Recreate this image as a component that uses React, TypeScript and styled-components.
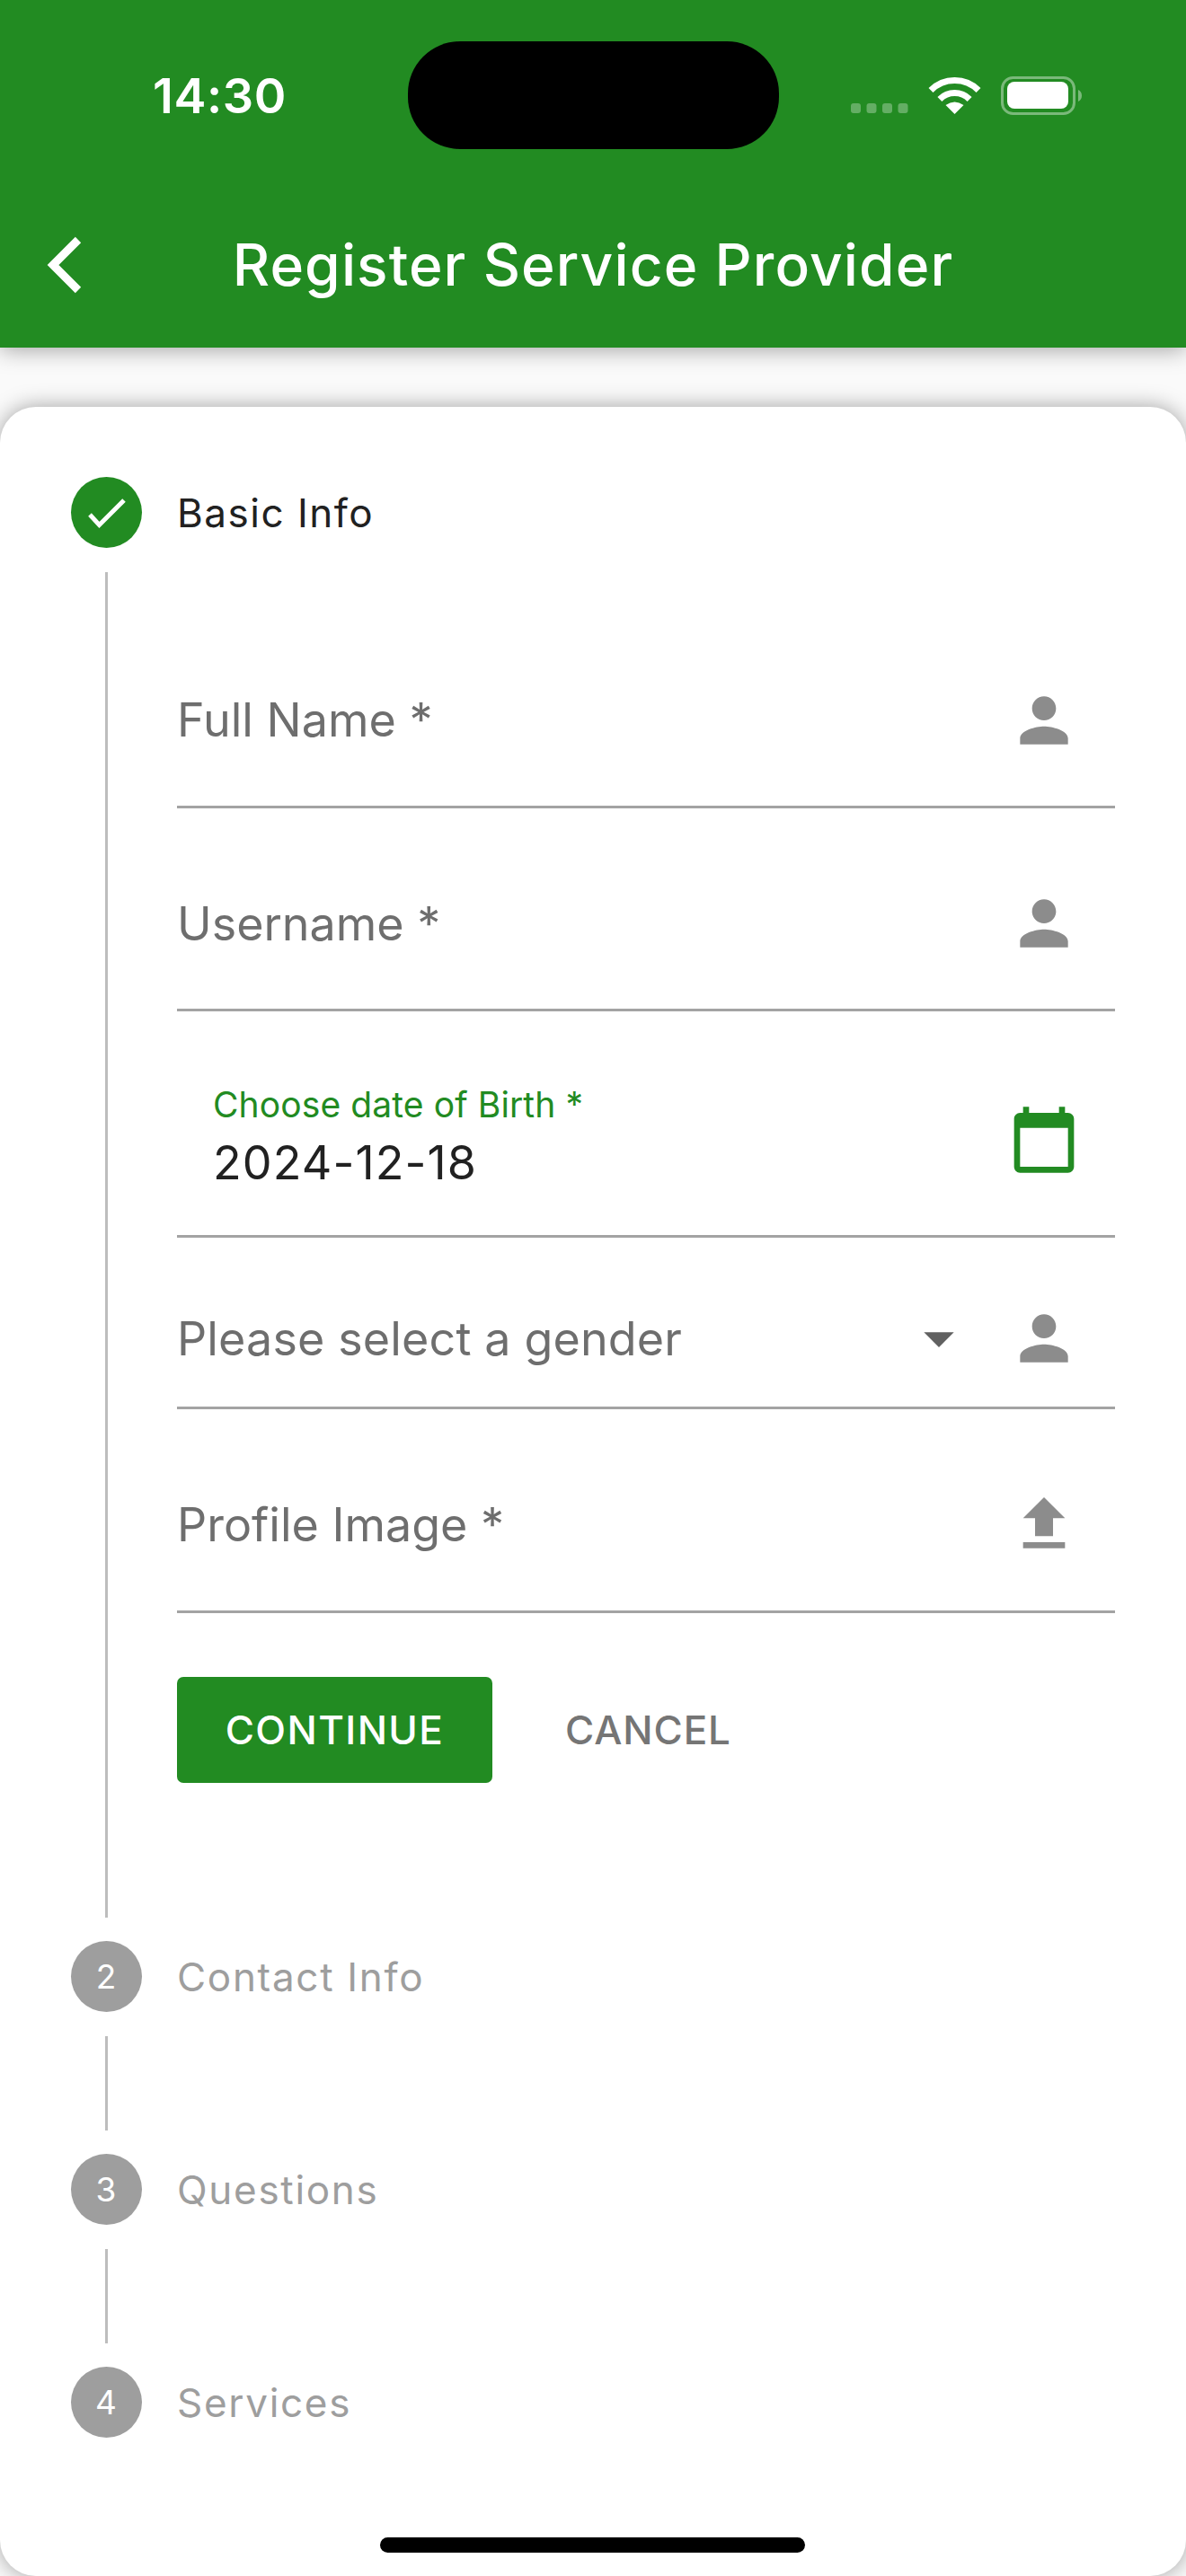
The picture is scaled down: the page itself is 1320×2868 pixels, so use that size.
import React from "react";
import styled, { createGlobalStyle } from "styled-components";

const GREEN = "#228B22";

const Global = createGlobalStyle`
  html, body { margin: 0; padding: 0; background: #fafafa; }
  * { box-sizing: border-box; }
`;

const Page = styled.div`
  width: 1320px;
  height: 2868px;
  display: flex;
  flex-direction: column;
  overflow: hidden;
  background: #fafafa;
  font-family: Inter, "Liberation Sans", sans-serif;
`;

const Header = styled.header`
  position: relative;
  height: 387px;
  flex-shrink: 0;
  padding-top: 46px;
  background: ${GREEN};
  box-shadow: 0 2px 24px rgba(0, 0, 0, 0.36);
  color: #fff;
`;

const StatusBar = styled.div`
  display: flex;
  align-items: center;
  height: 120px;
  padding-left: 170px;
`;

const Time = styled.div`
  width: 150px;
  margin-right: 134px;
  font-size: 54px;
  font-weight: 600;
  letter-spacing: 0.6px;
  white-space: nowrap;
`;

const Island = styled.div`
  width: 413px;
  height: 120px;
  margin-right: 80px;
  border-radius: 58px;
  background: #000;
`;

const NavBar = styled.div`
  display: grid;
  grid-template-columns: 1fr auto 1fr;
  align-items: center;
  height: 184px;
  margin-top: 37px;
`;

const BackButton = styled.div`
  display: flex;
  padding-left: 52px;
`;

const Title = styled.h1`
  margin: 0;
  font-size: 64px;
  font-weight: 500;
  line-height: 1;
  letter-spacing: 1.1px;
  white-space: nowrap;
`;

const Card = styled.main`
  position: relative;
  flex: 1;
  margin-top: 66px;
  padding: 78px 79px 0;
  border-radius: 40px;
  background: #fff;
  box-shadow: 0 0 24px rgba(0, 0, 0, 0.36);
`;

const StepHead = styled.div`
  display: flex;
  align-items: center;
  gap: 40px;
  height: 79px;
`;

const StepCircle = styled.div<{ $active?: boolean }>`
  display: flex;
  align-items: center;
  justify-content: center;
  width: 79px;
  height: 79px;
  padding-right: 1px;
  border-radius: 50%;
  background: ${(p) => (p.$active ? GREEN : "#9e9e9e")};
  color: #fff;
  font-size: 37px;
`;

const StepTitle = styled.div<{ $active?: boolean }>`
  margin-left: -1px;
  font-size: 44px;
  letter-spacing: ${(p) => (p.$active ? 1.5 : 1.7)}px;
  color: ${(p) => (p.$active ? "#212121" : "#9e9e9e")};
`;

const StepBody = styled.div<{ $height: number }>`
  display: flex;
  height: ${(p) => p.$height}px;
  margin: 27px 0 26px 38px;
`;

const Connector = styled.div`
  width: 3px;
  flex-shrink: 0;
  background: #bdbdbd;
`;

const StepContent = styled.div`
  width: 1044px;
  margin-left: 77px;
  padding-top: 37px;
`;

const Field = styled.div<{ $height: number; $top: number }>`
  display: flex;
  align-items: center;
  height: ${(p) => p.$height}px;
  padding-top: ${(p) => p.$top}px;
  padding-right: 39px;
  border-bottom: 3px solid #a3a3a3;
`;

const Placeholder = styled.div<{ $wide?: boolean }>`
  flex: 1;
  font-size: 52px;
  letter-spacing: ${(p) => (p.$wide ? 0.15 : 0)}px;
  color: #6e6e6e;
  white-space: nowrap;
`;

const DateBlock = styled.div`
  flex: 1;
  display: flex;
  flex-direction: column;
  padding-left: 40px;
  margin-top: -6px;
`;

const FloatingLabel = styled.div`
  font-size: 39px;
  line-height: 47px;
  letter-spacing: 0.1px;
  color: ${GREEN};
`;

const DateValue = styled.div`
  margin-top: 11px;
  font-size: 52px;
  line-height: 62px;
  letter-spacing: 1.1px;
  color: #212121;
`;

const DropArrow = styled.div`
  display: flex;
  margin-right: 37px;
`;

const ButtonRow = styled.div`
  display: flex;
  align-items: center;
  margin-top: 71px;
`;

const ContinueButton = styled.button`
  width: 351px;
  height: 118px;
  padding: 0;
  border: 0;
  border-radius: 7px;
  background: ${GREEN};
  color: #fff;
  font: 500 44px Inter, "Liberation Sans", sans-serif;
  letter-spacing: 1.4px;
`;

const CancelButton = styled.button`
  margin-left: 81px;
  padding: 0;
  border: 0;
  background: none;
  color: #757575;
  font: 500 44px Inter, "Liberation Sans", sans-serif;
  letter-spacing: 0.9px;
`;

const HomeIndicator = styled.div`
  position: absolute;
  left: 423px;
  bottom: 26px;
  width: 473px;
  height: 17px;
  border-radius: 9px;
  background: #000;
`;

const person =
  "M12 12c2.21 0 4-1.79 4-4s-1.79-4-4-4-4 1.79-4 4 1.79 4 4 4zm0 2c-2.67 0-8 1.34-8 4v2h16v-2c0-2.66-5.33-4-8-4z";
const calendar =
  "M20 3h-1V1h-2v2H7V1H5v2H4c-1.1 0-2 .9-2 2v16c0 1.1.9 2 2 2h16c1.1 0 2-.9 2-2V5c0-1.1-.9-2-2-2zm0 18H4V8h16v13z";
const upload = "M9 16h6v-6h4l-7-7-7 7h4zm-4 2h14v2H5z";
const arrow = "M7 10l5 5 5-5z";

const Icon = ({ d, color = "#8c8c8c" }: { d: string; color?: string }) => (
  <svg width="80" height="80" viewBox="0 0 24 24" fill={color} style={{ flexShrink: 0 }}>
    <path d={d} />
  </svg>
);

const StatusIcons = () => (
  <svg width="257" height="43" viewBox="0 0 257 43" fill="none">
    {[0, 17.5, 35, 52.5].map((x) => (
      <rect key={x} x={x} y="30" width="11" height="11" rx="3" fill="#fff" opacity="0.3" />
    ))}
    <g transform="translate(88 1)">
      <path d="M1 14.5A37.5 37.5 0 0 1 54 14.5" stroke="#fff" strokeWidth="7" />
      <path d="M10.9 24.4A23.5 23.5 0 0 1 44.1 24.4" stroke="#fff" strokeWidth="7" />
      <path d="M27.5 41L17.5 31Q27.5 24 37.5 31Z" fill="#fff" />
    </g>
    <rect x="168.5" y="1.5" width="80" height="40" rx="12" stroke="#fff" strokeWidth="3" opacity="0.4" />
    <rect x="174" y="6" width="68" height="30" rx="8" fill="#fff" />
    <path d="M253 15c2.5 1 4 3.5 4 6.5s-1.5 5.500-4 6.500z" fill="#fff" opacity="0.4" />
  </svg>
);

const steps = [
  { n: 2, label: "Contact Info", line: true },
  { n: 3, label: "Questions", line: true },
  { n: 4, label: "Services", line: false },
];

export default function App() {
  return (
    <Page>
      <Global />
      <Header>
        <StatusBar>
          <Time>14:30</Time>
          <Island />
          <StatusIcons />
        </StatusBar>
        <NavBar>
          <BackButton>
            <svg width="40" height="66" viewBox="0 0 40 66" fill="none">
              <path d="M35 5L7 33L35 61" stroke="#fff" strokeWidth="9" />
            </svg>
          </BackButton>
          <Title>Register Service Provider</Title>
        </NavBar>
      </Header>
      <Card>
        <StepHead>
          <StepCircle $active>
            <svg width="60" height="60" viewBox="0 0 60 60" fill="none">
              <path d="M21 43L31.500 54.500L59 27" transform="translate(-9 -11)" stroke="#fff" strokeWidth="5" />
            </svg>
          </StepCircle>
          <StepTitle $active>Basic Info</StepTitle>
        </StepHead>
        <StepBody $height={1498}>
          <Connector />
          <StepContent>
            <Field $height={226} $top={32}>
              <Placeholder>Full Name *</Placeholder>
              <Icon d={person} />
            </Field>
            <Field $height={226} $top={33}>
              <Placeholder>Username *</Placeholder>
              <Icon d={person} />
            </Field>
            <Field $height={252} $top={37}>
              <DateBlock>
                <FloatingLabel>Choose date of Birth *</FloatingLabel>
                <DateValue>2024-12-18</DateValue>
              </DateBlock>
              <Icon d={calendar} color={GREEN} />
            </Field>
            <Field $height={191} $top={36}>
              <Placeholder $wide>Please select a gender</Placeholder>
              <DropArrow>
                <Icon d={arrow} color="#616161" />
              </DropArrow>
              <Icon d={person} />
            </Field>
            <Field $height={227} $top={32}>
              <Placeholder>Profile Image *</Placeholder>
              <Icon d={upload} />
            </Field>
            <ButtonRow>
              <ContinueButton>CONTINUE</ContinueButton>
              <CancelButton>CANCEL</CancelButton>
            </ButtonRow>
          </StepContent>
        </StepBody>
        {steps.map((s) => (
          <React.Fragment key={s.n}>
            <StepHead>
              <StepCircle>{s.n}</StepCircle>
              <StepTitle>{s.label}</StepTitle>
            </StepHead>
            {s.line && (
              <StepBody $height={105}>
                <Connector />
              </StepBody>
            )}
          </React.Fragment>
        ))}
        <HomeIndicator />
      </Card>
    </Page>
  );
}
